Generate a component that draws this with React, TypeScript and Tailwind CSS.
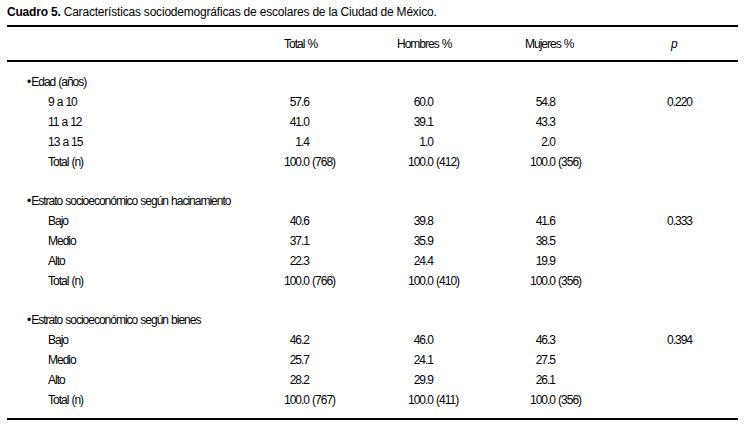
const sections = [
  {
    title: 'Edad (años)',
    rows: [
      { label: '9 a 10', total: '57.6', hombres: '60.0', mujeres: '54.8', p: '0.220' },
      { label: '11 a 12', total: '41.0', hombres: '39.1', mujeres: '43.3', p: '' },
      { label: '13 a 15', total: '1.4', hombres: '1.0', mujeres: '2.0', p: '' },
      { label: 'Total (n)', total: '100.0 (768)', hombres: '100.0 (412)', mujeres: '100.0 (356)', p: '' },
    ],
  },
  {
    title: 'Estrato socioeconómico según hacinamiento',
    rows: [
      { label: 'Bajo', total: '40.6', hombres: '39.8', mujeres: '41.6', p: '0.333' },
      { label: 'Medio', total: '37.1', hombres: '35.9', mujeres: '38.5', p: '' },
      { label: 'Alto', total: '22.3', hombres: '24.4', mujeres: '19.9', p: '' },
      { label: 'Total (n)', total: '100.0 (766)', hombres: '100.0 (410)', mujeres: '100.0 (356)', p: '' },
    ],
  },
  {
    title: 'Estrato socioeconómico según bienes',
    rows: [
      { label: 'Bajo', total: '46.2', hombres: '46.0', mujeres: '46.3', p: '0.394' },
      { label: 'Medio', total: '25.7', hombres: '24.1', mujeres: '27.5', p: '' },
      { label: 'Alto', total: '28.2', hombres: '29.9', mujeres: '26.1', p: '' },
      { label: 'Total (n)', total: '100.0 (767)', hombres: '100.0 (411)', mujeres: '100.0 (356)', p: '' },
    ],
  },
];

// decimal-aligned number: integer part right-aligned in a fixed box
function Num({ value }: { value: string }) {
  const dot = value.indexOf('.');
  const intPart = value.slice(0, dot);
  const rest = value.slice(dot);
  return (
    <span className="inline-flex whitespace-pre">
      <span className="inline-block w-[17px] text-right">{intPart}</span>
      <span>{rest}</span>
    </span>
  );
}

const grid = 'grid grid-cols-[277px_113px_128px_142px_71px]';

export default function App() {
  return (
    <div className="w-[749px] h-[441px] bg-white text-black font-['Liberation_Sans',Arial,sans-serif] text-[12px] tracking-[-1px] [word-spacing:0.7px] leading-[20px]">
      <div className="pl-[7px] pt-[3px] h-[25px] text-[12px] tracking-[-0.2px] [word-spacing:0px] leading-[18px]">
        <span className="font-bold">Cuadro 5.</span> Características sociodemográficas de escolares de la Ciudad de México.
      </div>

      <div className="ml-[7px] w-[731px] border-t-2 border-b-2 border-black">
        {/* Header */}
        <div className={`${grid} h-[33px] items-center`}>
          <div />
          <div>Total %</div>
          <div>Hombres %</div>
          <div>Mujeres %</div>
          <div className="pl-[4px] italic">p</div>
        </div>
      </div>

      <div className="ml-[7px] w-[731px] pt-[11px] pb-[8px] border-b-2 border-black">
        {sections.map((s, i) => (
          <div key={s.title} className={i > 0 ? 'mt-[20px]' : ''}>
            <div className="pl-[20px] h-[19px] leading-[19px]">
              <span className="mr-[1px]">•</span>
              {s.title}
            </div>
            {s.rows.map(r => (
              <div key={r.label} className={`${grid} h-[20px]`}>
                <div className="pl-[41px]">{r.label}</div>
                <div><Num value={r.total} /></div>
                <div className="pl-[11px]"><Num value={r.hombres} /></div>
                <div className="pl-[5px]"><Num value={r.mujeres} /></div>
                <div>{r.p}</div>
              </div>
            ))}
          </div>
        ))}
      </div>
    </div>
  );
}
